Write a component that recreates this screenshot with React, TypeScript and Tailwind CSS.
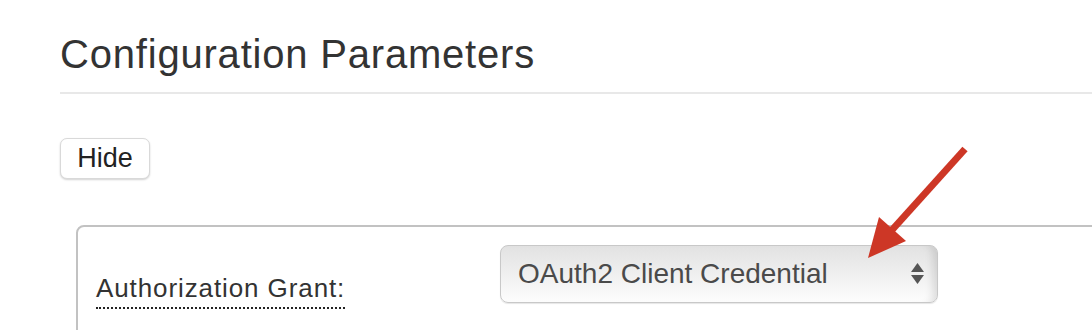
export default function App() {
  const font = { fontFamily: '"Liberation Sans", Arial, sans-serif' }

  return (
    <div className="relative h-[330px] w-[1092px] overflow-hidden bg-white" style={font}>
      <div className="pl-[60px]">
        {/* Heading */}
        <h1 className="mt-[32px] border-b-2 border-[#e8e8e8] pb-[16px] text-[40px] leading-[44px] tracking-[0.8px] text-[#333]">
          Configuration Parameters
        </h1>

        {/* Hide button */}
        <button className="mt-[44px] flex h-[41px] w-[90px] items-center justify-center rounded-[7px] border border-[#d9d9d9] bg-white text-[27px] leading-none text-[#222] shadow-[0_1px_2px_rgba(0,0,0,0.18)]">
          Hide
        </button>

        {/* Fieldset */}
        <div className="mt-[46px] ml-[16px] w-[1100px] rounded-tl-[8px] border-2 border-[#c2c2c2] pt-[18px] pl-[18px]">
          <div className="flex flex-col gap-[25px]">
            <div className="flex items-start">
              <div className="w-[404px] pt-[28px]">
                <span className="inline-block border-b-2 border-dotted border-[#222] pb-[4px] text-[26px] leading-[30px] tracking-[0.9px] text-[#333]">
                  Authorization Grant:
                </span>
              </div>
              <SelectBox value="OAuth2 Client Credential" />
            </div>
            <div className="flex items-start">
              <div className="w-[404px]" />
              <SelectBox value="" />
            </div>
          </div>
        </div>
      </div>

      {/* Red annotation arrow */}
      <svg className="pointer-events-none absolute top-0 left-0" width="1092" height="330" viewBox="0 0 1092 330">
        <line x1="965" y1="149" x2="892" y2="230" stroke="#cd3726" strokeWidth="7" />
        <polygon points="879,217 906,241 868,258" fill="#cd3726" />
      </svg>
    </div>
  )
}

function SelectBox({ value }: { value: string }) {
  return (
    <div className="flex h-[58px] w-[438px] items-center justify-between rounded-[8px] border border-[#c8c8c8] bg-gradient-to-b from-[#e2e2e2] to-[#fdfdfd] pr-[13px] pl-[17px] shadow-[inset_-10px_0_8px_-6px_rgba(0,0,0,0.12),0_1px_1px_rgba(0,0,0,0.1)]">
      <span className="text-[28px] leading-none text-[#4a4a4a]">{value}</span>
      <svg width="13" height="22" viewBox="0 0 13 22">
        <polygon points="6.5,0 13,9 0,9" fill="#555" />
        <polygon points="0,12 13,12 6.5,21" fill="#555" />
      </svg>
    </div>
  )
}
